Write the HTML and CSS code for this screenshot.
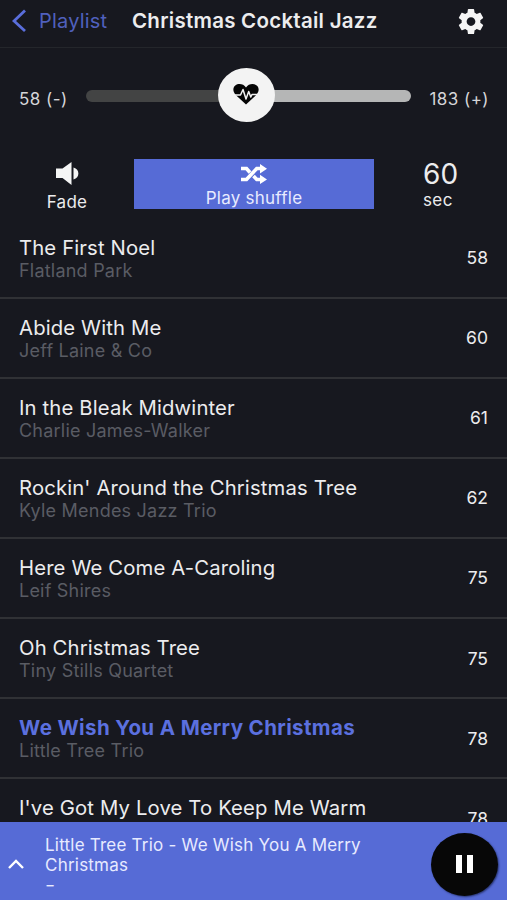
FILE: index.html
```html
<!DOCTYPE html>
<html lang="en">
<head>
<meta charset="utf-8">
<meta name="viewport" content="width=device-width, initial-scale=1">
<title>Christmas Cocktail Jazz</title>
<link rel="stylesheet" href="styles.css">
</head>
<body>
<div class="app">
  <header class="nav">
    <svg class="back-icon" viewBox="0 0 16 24"><path d="M13 1.5 2 12l11 10"/></svg>
    <span class="back">Playlist</span>
    <h1 class="heading">Christmas Cocktail Jazz</h1>
    <svg class="gear" viewBox="2 2 20 20"><path d="M19.43 12.98c.04-.32.07-.64.07-.98s-.03-.66-.07-.98l2.11-1.65c.19-.15.24-.42.12-.64l-2-3.46c-.12-.22-.39-.3-.61-.22l-2.49 1c-.52-.4-1.08-.73-1.69-.98l-.38-2.65C14.46 2.18 14.25 2 14 2h-4c-.25 0-.46.18-.49.42l-.38 2.65c-.61.25-1.17.59-1.69.98l-2.49-1c-.23-.09-.49 0-.61.22l-2 3.46c-.13.22-.07.49.12.64l2.11 1.65c-.04.32-.07.65-.07.98s.03.66.07.98l-2.11 1.65c-.19.15-.24.42-.12.64l2 3.46c.12.22.39.3.61.22l2.49-1c.52.4 1.08.73 1.69.98l.38 2.65c.03.24.24.42.49.42h4c.25 0 .46-.18.49-.42l.38-2.65c.61-.25 1.17-.59 1.69-.98l2.49 1c.23.09.49 0 .61-.22l2-3.46c.12-.22.07-.49-.12-.64l-2.11-1.65zM12 15.500c-1.930 0-3.500-1.570-3.500-3.500s1.570-3.500 3.500-3.500 3.500 1.570 3.500 3.500-1.570 3.500-3.500 3.500z"/></svg>
  </header>

  <section class="tempo">
    <span class="tempo-label low">58 (-)</span>
    <div class="slider">
      <div class="track-low"></div>
      <div class="thumb">
        <svg class="heart" viewBox="0 0 26 21"><path class="heart-shape" d="M13 20.500 3 11.200C-.5 7.800-.3 3.500 2.300 1.500 5.500-1 10.500-.2 13 3.500 15.500-.2 20.500-1 23.700 1.500c2.600 2 2.800 6.300-.7 9.700z"/><path class="pulse" d="M0 11h7.500L10 5.500l3 9.500 2.700-7.500L17.800 13l1.200-2.500h7"/></svg>
      </div>
      <div class="track-high"></div>
    </div>
    <span class="tempo-label high">183 (+)</span>
  </section>

  <section class="controls">
    <div class="fade">
      <svg class="speaker" viewBox="0 0 23 23"><path d="M0 6.500h6.500L15.500 0v23l-9-7H0zM17.500 5.500c6.500 1.500 6.500 10.500 0 12z"/></svg>
      <span>Fade</span>
    </div>
    <div class="shuffle">
      <svg class="shuffle-icon" viewBox="0 0 26 20"><path class="line" d="M0 4.500h5.500l3.500 4M0 15.500h5.500L15.800 4.500H20M12.500 12l3.300 3.500H20"/><path class="tip" d="M19 0l7 4.700-7 4.800zM19 10.700l7 4.800-7 4.500z"/></svg>
      <span>Play shuffle</span>
    </div>
    <div class="timer"><span class="seconds">60</span><span class="unit">sec</span></div>
  </section>

  <main class="songs">
    <div class="song"><div><div class="title">The First Noel</div><div class="artist">Flatland Park</div></div><span class="bpm">58</span></div>
    <div class="song"><div><div class="title">Abide With Me</div><div class="artist">Jeff Laine &amp; Co</div></div><span class="bpm">60</span></div>
    <div class="song"><div><div class="title">In the Bleak Midwinter</div><div class="artist">Charlie James-Walker</div></div><span class="bpm">61</span></div>
    <div class="song"><div><div class="title">Rockin' Around the Christmas Tree</div><div class="artist">Kyle Mendes Jazz Trio</div></div><span class="bpm">62</span></div>
    <div class="song"><div><div class="title">Here We Come A-Caroling</div><div class="artist">Leif Shires</div></div><span class="bpm">75</span></div>
    <div class="song"><div><div class="title">Oh Christmas Tree</div><div class="artist">Tiny Stills Quartet</div></div><span class="bpm">75</span></div>
    <div class="song active"><div><div class="title">We Wish You A Merry Christmas</div><div class="artist">Little Tree Trio</div></div><span class="bpm">78</span></div>
    <div class="song"><div><div class="title">I've Got My Love To Keep Me Warm</div></div><span class="bpm">78</span></div>
  </main>

  <footer class="player">
    <svg class="chevron" viewBox="0 0 16 10"><path d="m1 9 7-7 7 7"/></svg>
    <div class="now">Little Tree Trio - We Wish You A Merry Christmas<br><span class="dash">-</span></div>
    <div class="pause"><i></i><i></i></div>
  </footer>
</div>
</body>
</html>
```
FILE: styles.css
```css
* { box-sizing: border-box; }
body {
  margin: 0;
  background: #17181f;
  color: #ececee;
  font-family: Inter, "Liberation Sans", sans-serif;
}
svg { display: block; flex: none; fill: #f5f5f5; }
.app { width: 507px; height: 900px; display: flex; flex-direction: column; overflow: hidden; }

.nav {
  height: 48px;
  flex: none;
  display: flex;
  align-items: center;
  padding: 0 23px 5px 12px;
  border-bottom: 1px solid #24262b;
}
.back-icon { width: 16px; height: 24px; fill: none; stroke: #5a6edb; stroke-width: 2.8; }
.back { margin-left: 11px; width: 93px; color: #5060bd; font-size: 20px; line-height: 26px; letter-spacing: .2px; white-space: nowrap; }
.heading { margin: 0; flex: 1; font-size: 20.500px; line-height: 26px; font-weight: 600; letter-spacing: .26px; white-space: nowrap; }
.gear { width: 26px; height: 25px; }

.tempo { height: 93px; flex: none; display: flex; align-items: center; padding: 0 19px; }
.tempo-label { font-size: 17px; line-height: 22px; margin-top: 8px; letter-spacing: .45px; color: #d5d5d8; white-space: nowrap; }
.low { width: 67px; }
.high { flex: 1; text-align: right; margin-right: -1px; }
.slider { width: 325px; display: flex; align-items: center; }
.track-low, .track-high { height: 12px; margin-top: 2px; }
.track-low { width: 136px; margin-right: -4px; background: #434444; border-radius: 6px 0 0 6px; }
.track-high { flex: 1; margin-left: -4px; background: #b5b6b6; border-radius: 0 6px 6px 0; }
.thumb { width: 57px; height: 54px; margin-left: -.5px; z-index: 1; flex: none; border-radius: 50%; background: #f3f3f3; display: flex; align-items: center; justify-content: center; }
.heart { width: 26px; height: 21px; }
.heart-shape { fill: #050505; }
.pulse { fill: none; stroke: #f3f3f3; stroke-width: 1.5; stroke-linejoin: round; }

.controls { height: 77px; flex: none; display: flex; align-items: flex-start; padding-top: 18px; font-size: 17px; line-height: 22px; letter-spacing: .25px; }
.fade, .shuffle { display: flex; flex-direction: column; align-items: center; }
.fade { width: 134px; padding-top: 3px; }
.speaker { width: 23px; height: 23px; margin-bottom: 6px; }
.shuffle { width: 240px; height: 50px; background: #566bd6; color: #e7eaff; padding-top: 5px; }
.shuffle-icon { width: 26px; height: 20px; margin-bottom: 3px; }
.shuffle-icon .line { fill: none; stroke: #fff; stroke-width: 3.6; }
.shuffle-icon .tip { fill: #fff; }
.timer { padding-left: 49px; display: flex; flex-direction: column; }
.seconds { font-size: 28px; line-height: 30px; }
.unit { line-height: 22px; letter-spacing: .4px; }

.songs { flex: 1; min-height: 0; overflow: hidden; padding-top: .6px; }
.song {
  height: 80.120px;
  display: flex;
  justify-content: space-between;
  padding: 16px 19px 0;
  border-bottom: 2px solid #303135;
}
.title { font-size: 20.300px; line-height: 26px; letter-spacing: .14px; white-space: nowrap; }
.artist { font-size: 18px; line-height: 20px; letter-spacing: .22px; color: #5a5c64; white-space: nowrap; }
.bpm { font-size: 17.500px; line-height: 22px; margin-top: 12.400px; }
.active .title { color: #5b70df; font-weight: 700; font-size: 20.500px; letter-spacing: .38px; }

.player { height: 78px; flex: none; background: #566bd6; display: flex; align-items: center; padding: 0 9px 0 8px; }
.chevron { width: 16px; height: 10px; margin-top: 5px; fill: none; stroke: #fff; stroke-width: 2.4; }
.now { width: 360px; height: 73px; margin: 8px 0 0 21px; padding: 6px 20px 0 0; font-size: 17px; line-height: 20.400px; letter-spacing: .22px; color: #e7eaff; }
.dash { display: inline-block; transform: scaleX(1.3); transform-origin: left; }
.pause { width: 67px; height: 63px; margin: 6px 0 0 auto; flex: none; border-radius: 50%; background: #070707; box-shadow: 1px 1px 2px #27346f; display: flex; align-items: center; justify-content: center; gap: 5px; }
.pause i { width: 6px; height: 18px; background: #fff; }
```
